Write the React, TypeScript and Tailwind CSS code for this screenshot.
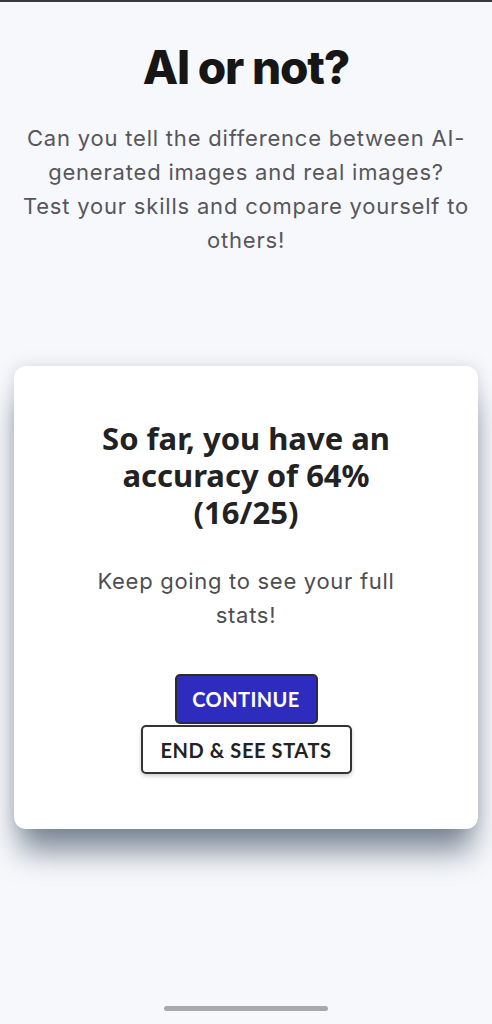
import React from "react";

export default function App() {
  return (
    <div className="min-h-[1024px] w-[492px] bg-[#f7f8fb] flex flex-col items-center relative overflow-hidden">
      <div className="w-full h-[2px] bg-[#3a3a3e]" />
      <h1 className="mt-[39px] text-[46px] leading-[52px] font-extrabold tracking-[-1.2px] text-[#161616] font-['Inter',sans-serif]">
        AI or not?
      </h1>
      <p className="mt-[28px] w-[476px] text-center text-[22px] leading-[34px] text-[#56565b] font-['Inter',sans-serif] tracking-[0.8px]">
        Can you tell the difference between AI-generated images and real images?
        <br />
        Test your skills and compare yourself to others!
      </p>
      <div className="mt-[109px] w-[464px] h-[463px] bg-white rounded-[12px] shadow-[0_28px_30px_-6px_rgba(60,78,98,0.65),0_0_16px_rgba(120,130,150,0.25)] flex flex-col items-center">
        <h2 className="mt-[54px] w-[310px] text-center text-[31px] leading-[37px] font-bold text-[#222] font-['Noto_Sans',sans-serif]">
          So far, you have an accuracy of 64% (16/25)
        </h2>
        <p className="mt-[33px] w-[312px] text-center text-[22px] leading-[34px] text-[#4d4d52] font-['Inter',sans-serif] tracking-[0.7px]">
          Keep going to see your full stats!
        </p>
        <button className="mt-[42px] w-[143px] h-[50px] bg-[#2e2cbf] border-2 border-[#2a2a3a] rounded-[5px] text-white text-[20px] tracking-[0.4px] font-bold font-['Lato',sans-serif]">
          CONTINUE
        </button>
        <button className="mt-[1px] w-[211px] h-[49px] bg-white border-2 border-[#333] rounded-[5px] text-[#222] text-[20px] tracking-[0.6px] font-bold font-['Lato',sans-serif] shadow-[0_2px_4px_rgba(0,0,0,0.2)]">
          END &amp; SEE STATS
        </button>
      </div>
      <div className="absolute left-[164px] top-[1006px] w-[164px] h-[5px] rounded-full bg-[#a9a9ad]" />
    </div>
  );
}
